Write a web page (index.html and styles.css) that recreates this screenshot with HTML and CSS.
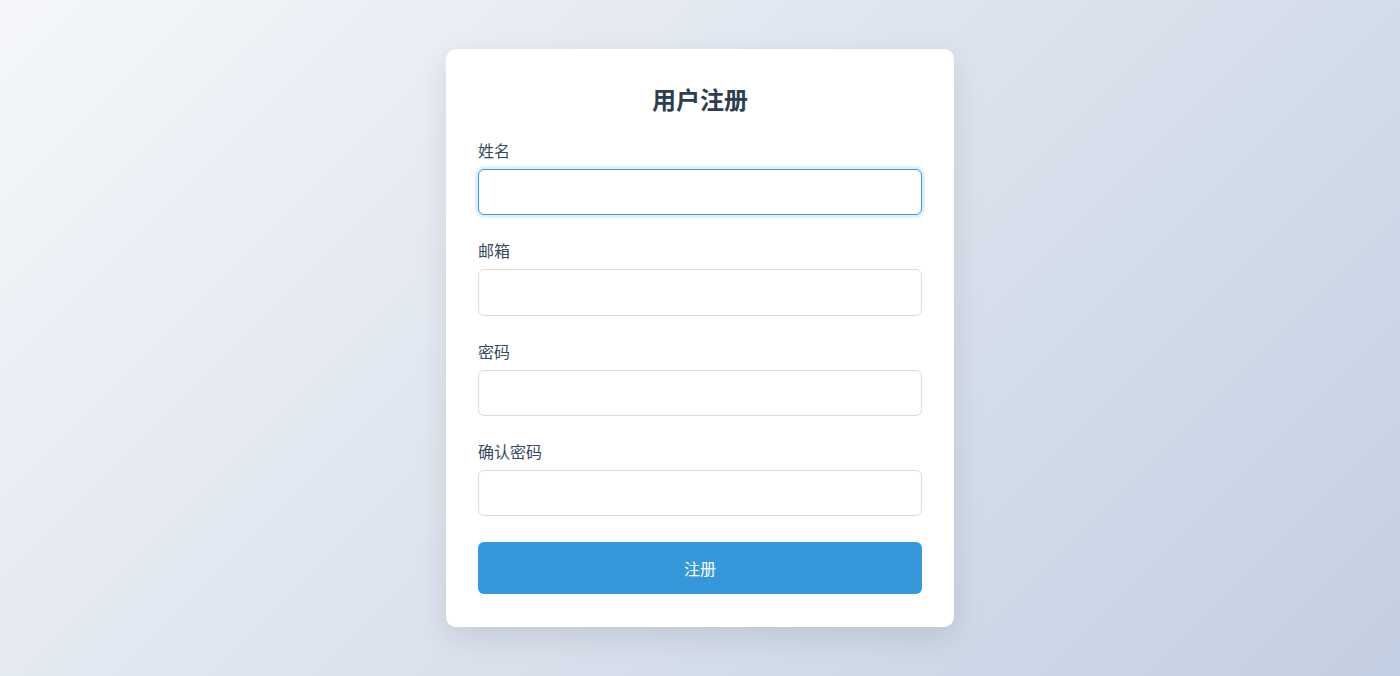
FILE: index.html
```html
<!DOCTYPE html>
<html lang="zh-CN">
<head>
    <meta charset="UTF-8">
    <meta name="viewport" content="width=device-width, initial-scale=1.0">
    <title>用户注册</title>
    <link rel="stylesheet" href="styles.css">
</head>
<body>

<div class="register-card">
    <h2 class="register-title">用户注册</h2>
    <form class="register-form" onsubmit="return false;">
        <div class="form-group">
            <label for="name">姓名</label>
            <input type="text" id="name" autofocus>
        </div>
        <div class="form-group">
            <label for="email">邮箱</label>
            <input type="email" id="email">
        </div>
        <div class="form-group">
            <label for="password">密码</label>
            <input type="password" id="password">
        </div>
        <div class="form-group">
            <label for="confirm">确认密码</label>
            <input type="password" id="confirm">
        </div>
        <button type="submit" class="register-btn">注册</button>
    </form>
</div>

</body>
</html>
```

FILE: styles.css
```css
* {
    box-sizing: border-box;
}
body {
    margin: 0;
    min-height: 100vh;
    display: flex;
    justify-content: center;
    align-items: center;
    font-family: "Noto Sans CJK SC", "Noto Sans", sans-serif;
    background: linear-gradient(135deg, #f5f7fa 0%, #c3cfe2 100%);
}
.register-card {
    width: 508px;
    background-color: #ffffff;
    border-radius: 10px;
    padding: 32px 32px 33px;
    box-shadow: 0 10px 30px rgba(0, 0, 0, 0.1);
}
.register-title {
    margin: 0 0 22px;
    text-align: center;
    font-size: 24px;
    line-height: 35px;
    font-weight: bold;
    color: #2c3e50;
}
.form-group {
    display: flex;
    flex-direction: column;
    margin-bottom: 23px;
}
.form-group:last-of-type {
    margin-bottom: 26px;
}
.form-group label {
    font-size: 16px;
    line-height: 24px;
    color: #34495e;
    margin-bottom: 7px;
}
.form-group input {
    height: 46.3px;
    padding: 12px;
    font-size: 16px;
    font-family: inherit;
    border: 1px solid #dddddd;
    border-radius: 6px;
    outline: none;
    color: #2c3e50;
}
.form-group input:focus {
    border-color: #3498db;
    box-shadow: 0 0 0 3px rgba(52, 152, 219, 0.15);
}
.register-btn {
    display: block;
    width: 100%;
    height: 52px;
    border: none;
    border-radius: 6px;
    background-color: #3498db;
    color: #ffffff;
    font-size: 16px;
    font-family: inherit;
    cursor: pointer;
}
```
